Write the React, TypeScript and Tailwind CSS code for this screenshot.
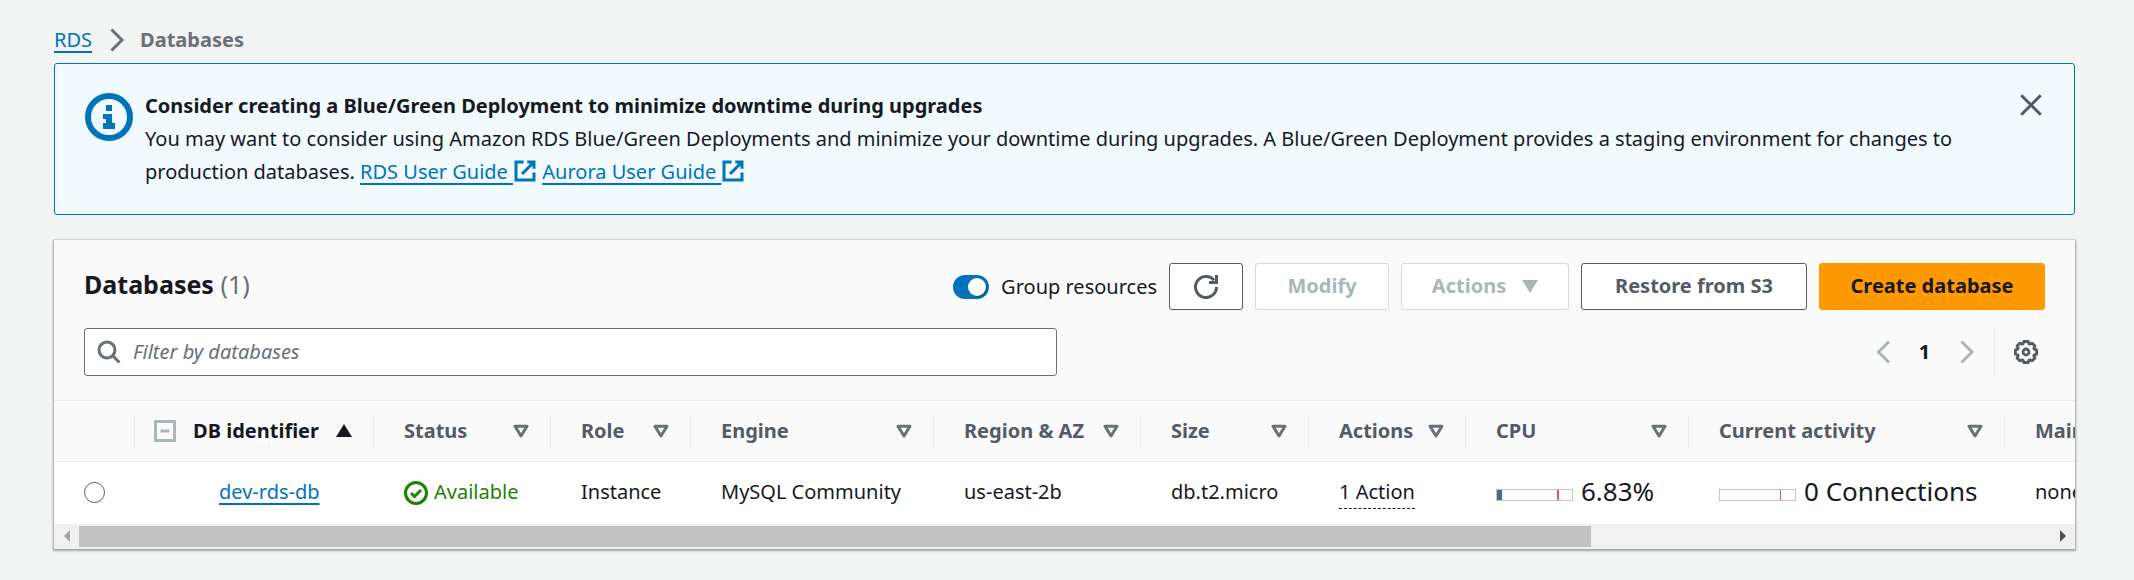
import React, { useState } from "react";

const focus = "focus-visible:outline-2 focus-visible:outline-offset-2 focus-visible:outline-[#0073bb]";

function ExternalIcon() {
  return (
    <svg viewBox="0 0 16 16" className="inline-block size-6 align-[-4px]" fill="none" stroke="currentColor" strokeWidth="2" aria-hidden="true">
      <path d="M9.500 2H14v4.500M6 10l8-8" />
      <path d="M14 9.050V14H2V2h5.040" />
    </svg>
  );
}

function Chevron({ left = false }: { left?: boolean }) {
  return (
    <svg viewBox="0 0 16 16" className="size-6" fill="none" stroke="currentColor" strokeWidth="2" aria-hidden="true">
      {left ? <path d="M12 1 5 8l7 7" /> : <path d="M5 1l7 7-7 7" />}
    </svg>
  );
}

function ExternalLink({ label }: { label: string }) {
  return (
    <a href="#guide" className={`whitespace-nowrap text-[#0073bb] underline decoration-2 underline-offset-4 ${focus}`}>
      {`${label}\u00a0`}
      <ExternalIcon />
    </a>
  );
}

function SortIcon() {
  return (
    <svg viewBox="0 0 16 14" className="h-[14px] w-4 shrink-0 text-[#687078]" fill="none" stroke="currentColor" strokeWidth="3" strokeLinejoin="round" aria-hidden="true">
      <path d="M2 2.200h12L8 12z" />
    </svg>
  );
}

function Meter({ value, label, marker }: { value: number; label: string; marker: number }) {
  return (
    <div className="flex items-center gap-2 text-[26px] leading-[33px]">
      <svg viewBox="0 0 77 12" className="mt-1.5 h-3 w-[77px] shrink-0" aria-hidden="true">
        <rect x="0.5" y="0.5" width="76" height="11" fill="#fff" stroke="#c4c4c4" />
        <rect x="1" y="1" width={value * 0.75} height="10" fill="#486a8e" />
        <rect x="61" y="1" width={marker} height="10" fill="#e0575b" />
      </svg>
      <span>{label}</span>
    </div>
  );
}

const columns = [
  { name: "Status", width: "w-[177px]" },
  { name: "Role", width: "w-[140px]" },
  { name: "Engine", width: "w-[243px]" },
  { name: "Region & AZ", width: "w-[207px]" },
  { name: "Size", width: "w-[168px]" },
  { name: "Actions", width: "w-[157px]" },
  { name: "CPU", width: "w-[223px]" },
  { name: "Current activity", width: "w-[316px]" },
  { name: "Maintenance", width: "w-[679px]" },
];

const buttonBase = `flex h-[47px] items-center justify-center rounded-[3px] border font-bold ${focus}`;
const cell = "p-0 pb-0.5 pl-[30px]";

export default function App() {
  const [grouped, setGrouped] = useState(true);
  return (
    <div className="min-h-screen bg-[#f2f3f3] pt-[23px] pr-[59px] pb-[30px] pl-[54px] font-['Noto_Sans',sans-serif] text-[20px] leading-[33px] text-[#16191f]">
      <nav aria-label="Breadcrumbs" className="mb-[7px] flex items-center">
        <a href="#rds" className={`text-[#0073bb] underline decoration-2 underline-offset-4 ${focus}`}>RDS</a>
        <span className="mx-3 text-[#687078]"><Chevron /></span>
        <span className="font-bold text-[#687078]">Databases</span>
      </nav>

      <section className="flex items-start rounded-[3px] border border-[#0073bb] bg-[#f1faff] px-[30px] pt-[25px] pb-[26px]">
        <svg viewBox="0 0 48 48" className="mt-1 size-12 shrink-0" fill="none" aria-hidden="true">
          <circle cx="24" cy="24" r="21" stroke="#0073bb" strokeWidth="6" />
          <path d="M21 12h6v6h-6zM18 21h9v9h3v6H18v-6h3v-4h-3z" fill="#0073bb" />
        </svg>
        <div className="ml-3 flex-1">
          <h2 className="font-bold">Consider creating a Blue/Green Deployment to minimize downtime during upgrades</h2>
          <p>
            You may want to consider using Amazon RDS Blue/Green Deployments and minimize your downtime during upgrades. A Blue/Green Deployment provides a staging environment for changes to production databases.{" "}
            <ExternalLink label="RDS User Guide" /> <ExternalLink label="Aurora User Guide" />
          </p>
        </div>
        <button type="button" aria-label="Dismiss" className={`mt-1 mr-px ml-[18px] text-[#545b64] ${focus}`}>
          <svg viewBox="0 0 16 16" className="size-6" fill="none" stroke="currentColor" strokeWidth="2" aria-hidden="true">
            <path d="M1.500 1.500l13 13M14.500 1.500l-13 13" />
          </svg>
        </button>
      </section>

      <section className="mt-[25px] bg-[#fafafa] shadow-[0_1px_2px_1px_rgba(0,28,36,0.35),0_0_1px_1px_#eaeded]">
        <div className="px-[30px] pt-[23px] pb-6">
          <div className="flex items-center gap-3">
            <h1 className="flex-1 pb-1 text-[25px] font-bold">
              Databases <span className="font-normal text-[#687078]">(1)</span>
            </h1>
            <label className="flex cursor-pointer items-center gap-3">
              <input type="checkbox" role="switch" checked={grouped} onChange={(e) => setGrouped(e.target.checked)} className="peer sr-only" />
              <span className="flex h-6 w-9 items-center rounded-full bg-[#687078] px-[3px] peer-checked:justify-end peer-checked:bg-[#0073bb] peer-focus-visible:outline-2">
                <span className="size-[18px] rounded-full bg-white shadow-[1px_1px_1px_rgba(0,0,0,0.3)]" />
              </span>
              Group resources
            </label>
            <button type="button" aria-label="Refresh" className={`${buttonBase} w-[74px] border-[#545b64] bg-white text-[#545b64]`}>
              <svg viewBox="0 0 24 24" className="size-6" fill="none" stroke="currentColor" strokeWidth="3" aria-hidden="true">
                <path d="M22.500 12A10.500 10.500 0 1 1 20 5.200" />
                <path d="M22.500 0v7.500H15" />
              </svg>
            </button>
            <button type="button" disabled className={`${buttonBase} w-[134px] border-[#d5dbdb] bg-white pb-0.5 text-[#aab7b8]`}>Modify</button>
            <button type="button" disabled className={`${buttonBase} w-[168px] gap-4 border-[#d5dbdb] bg-white pb-0.5 text-[#aab7b8]`}>
              Actions
              <svg viewBox="0 0 16 14" className="h-[14px] w-4" fill="currentColor" aria-hidden="true"><path d="M0 1h16L8 14z" /></svg>
            </button>
            <button type="button" className={`${buttonBase} w-[226px] border-[#545b64] bg-white pb-0.5 text-[#545b64]`}>Restore from S3</button>
            <button type="button" className={`${buttonBase} w-[226px] border-[#ff9900] bg-[#ff9900] pb-0.5`}>Create database</button>
          </div>
          <div className="mt-[18px] flex items-center">
            <label className="flex h-12 w-[calc(50%-8px)] items-center gap-3 rounded-[3px] border border-[#687078] bg-white px-3 text-[#687078] focus-within:border-[#0073bb]">
              <svg viewBox="0 0 24 24" className="size-6 shrink-0" fill="none" stroke="currentColor" strokeWidth="3" aria-hidden="true">
                <circle cx="10" cy="10" r="8" />
                <path d="M15.500 15.500l7 7" />
              </svg>
              <input type="text" aria-label="Filter by databases" placeholder="Filter by databases" className="min-w-0 flex-1 bg-transparent pb-0.5 text-[#16191f] outline-none placeholder:text-[#687078] placeholder:italic" />
            </label>
            <div className="ml-auto flex h-12 items-center">
              <button type="button" disabled aria-label="Previous page" className="text-[#aab7b8]"><Chevron left /></button>
              <button type="button" aria-current="page" className={`w-[59px] pb-0.5 font-bold ${focus}`}>1</button>
              <button type="button" disabled aria-label="Next page" className="text-[#aab7b8]"><Chevron /></button>
              <span className="ml-4 h-full w-px bg-[#eaeded]" />
              <button type="button" aria-label="Preferences" className={`mr-[7px] ml-[19px] text-[#545b64] ${focus}`}>
                <svg viewBox="0 0 24 24" className="size-6" fill="none" stroke="currentColor" strokeWidth="2.800" strokeLinejoin="round" aria-hidden="true">
                  <path d="M9.800 1.500h4.400l.7 2.300 1 .4 2.100-1.100 3 3-1.200 2.100.4 1 2.400.6v4.400l-2.400.6-.4 1 1.200 2.100-3 3-2.100-1.100-1 .4-.7 2.300H9.800l-.7-2.300-1-.4L6 20.900l-3-3 1.200-2.100-.4-1-2.400-.6V9.800l2.400-.6.4-1L3 6.100l3-3 2.100 1.100 1-.4z" />
                  <circle cx="12" cy="12" r="3" />
                </svg>
              </button>
            </div>
          </div>
        </div>

        <div className="overflow-x-auto [scrollbar-width:none]">
          <table className="w-[2630px] table-fixed border-collapse text-left whitespace-nowrap">
            <thead>
              <tr className="h-[61px] border-y border-[#eaeded] text-[#545b64]">
                <th scope="col" aria-label="Selection" className="w-[81px] p-0">
                  <div className="h-[33px] border-r border-[#eaeded]" />
                </th>
                <th scope="col" aria-sort="ascending" className="w-[239px] p-0">
                  <div className="flex h-[33px] items-center justify-between border-r border-[#eaeded] pr-[21px] pl-[19px] text-[#16191f]">
                    <svg viewBox="0 0 22 22" className="size-[22px]" fill="none" stroke="#aab7b8" strokeWidth="3" aria-hidden="true">
                      <path d="M1.500 1.500h19v19h-19zM6.500 11h9" />
                    </svg>
                    <span className="pb-0.5">DB identifier</span>
                    <svg viewBox="0 0 16 14" className="h-[14px] w-4" fill="currentColor" aria-hidden="true"><path d="M0 13h16L8 0z" /></svg>
                  </div>
                </th>
                {columns.map((column) => (
                  <th key={column.name} scope="col" className={`${column.width} p-0`}>
                    <div className="flex h-[33px] items-center justify-between border-r border-[#eaeded] pr-[21px] pl-[30px]">
                      <span className="pb-0.5">{column.name}</span>
                      <SortIcon />
                    </div>
                  </th>
                ))}
              </tr>
            </thead>
            <tbody>
              <tr className="h-[62px] bg-white">
                <td className="p-0 pl-[30px]">
                  <input type="radio" name="database" aria-label="Select dev-rds-db" className="block size-[21px] appearance-none rounded-full border border-[#545b64] bg-white checked:border-[6px] checked:border-[#0073bb]" />
                </td>
                <td className="p-0 pb-0.5 pl-[84px]">
                  <a href="#dev-rds-db" className={`text-[#0073bb] underline decoration-2 underline-offset-4 ${focus}`}>dev-rds-db</a>
                </td>
                <td className="p-0 pl-[30px] text-[#1d8102]">
                  <div className="flex items-center gap-[6px]">
                    <svg viewBox="0 0 24 24" className="size-6 shrink-0" fill="none" stroke="currentColor" strokeWidth="3" aria-hidden="true">
                      <circle cx="12" cy="12" r="10.500" />
                      <path d="M7 12l3.500 3.500L17 9" />
                    </svg>
                    <span className="pb-0.5">Available</span>
                  </div>
                </td>
                <td className={cell}>Instance</td>
                <td className={cell}>MySQL Community</td>
                <td className={cell}>us-east-2b</td>
                <td className={cell}>db.t2.micro</td>
                <td className={cell}>
                  <button type="button" className={`-mb-px border-b border-dashed border-[#16191f] ${focus}`}>1 Action</button>
                </td>
                <td className={cell}><Meter value={6.83} label="6.83%" marker={2} /></td>
                <td className={cell}><Meter value={0} label="0 Connections" marker={1} /></td>
                <td className={cell}>none</td>
              </tr>
            </tbody>
          </table>
        </div>
        <div aria-hidden="true" className="flex h-[25px] items-center bg-[#f1f1f1]">
          <span className="flex w-[25px] justify-center text-[#a3a3a3]">
            <svg viewBox="0 0 6 12" className="h-3 w-[6px]" fill="currentColor"><path d="M6 0v12L0 6z" /></svg>
          </span>
          <span className="flex-1"><span className="block h-[21px] w-[calc(77%-6px)] bg-[#c1c1c1]" /></span>
          <span className="flex w-[25px] justify-center text-[#505050]">
            <svg viewBox="0 0 6 12" className="h-3 w-[6px]" fill="currentColor"><path d="M0 0v12l6-6z" /></svg>
          </span>
        </div>
      </section>
    </div>
  );
}
